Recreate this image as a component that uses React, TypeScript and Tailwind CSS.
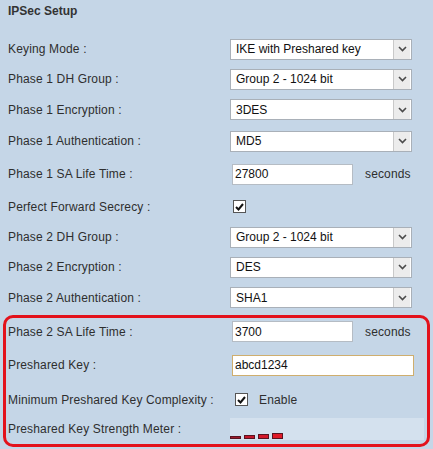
const font = { fontFamily: '"Liberation Sans", Arial, sans-serif' }

const Chevron = () => (
  <svg width="9" height="6" viewBox="0 0 9 6">
    <path d="M1 1 L4.5 4.5 L8 1" fill="none" stroke="#4a4a4a" strokeWidth="1.6" />
  </svg>
)

const Select = ({ value }: { value: string }) => (
  <div className="flex h-[21px] w-[182px] items-center border border-[#a9b0b8] bg-white">
    <div className="flex-1 pl-[5px] text-[12px] leading-none text-[#111]">{value}</div>
    <div className="mr-px flex h-[19px] w-[17px] items-center justify-center border-l border-[#c9c9c9] bg-[#ececec]">
      <Chevron />
    </div>
  </div>
)

const TextInput = ({ value, wide, gold }: { value: string; wide?: boolean; gold?: boolean }) => (
  <div
    className={
      'ml-[2px] flex h-[21px] items-center bg-white pl-[2px] text-[12px] leading-none text-[#111] ' +
      (wide ? 'w-[182px] ' : 'w-[121px] ') +
      (gold ? 'border border-[#cfae6e]' : 'border border-[#b5bcc4]')
    }
  >
    {value}
  </div>
)

const Check = () => (
  <div className="flex h-[13px] w-[13px] items-center justify-center border border-[#555] bg-white">
    <svg width="9" height="8" viewBox="0 0 9 8">
      <path d="M1 4 L3.5 6.5 L8 1" fill="none" stroke="#111" strokeWidth="2" />
    </svg>
  </div>
)

const Row = ({ label, h, children }: { label: string; h: string; children?: React.ReactNode }) => (
  <div className={'flex items-center ' + h}>
    <div className="w-[222px] shrink-0 text-[12px] tracking-[0.15px] text-[#2e2e2e]">{label}</div>
    <div className="flex items-center">{children}</div>
  </div>
)

const App = () => {
  return (
    <div className="h-[449px] w-[433px] overflow-hidden bg-[#c5d6e7]" style={font}>
      <div className="flex h-[22px] items-center pl-2 text-[12px] font-bold text-[#333]">IPSec Setup</div>
      <div className="mt-[12px] pl-2">
        <Row label="Keying Mode :" h="h-[30px]"><Select value="IKE with Preshared key" /></Row>
        <Row label="Phase 1 DH Group :" h="h-[30px]"><Select value="Group 2 - 1024 bit" /></Row>
        <Row label="Phase 1 Encryption :" h="h-[31px]"><Select value="3DES" /></Row>
        <Row label="Phase 1 Authentication :" h="h-[32px]"><Select value="MD5" /></Row>
        <Row label="Phase 1 SA Life Time :" h="h-[34px]">
          <TextInput value="27800" />
          <span className="ml-[12px] text-[12px] tracking-[0.15px] text-[#2e2e2e]">seconds</span>
        </Row>
        <Row label="Perfect Forward Secrecy :" h="h-[31px]">
          <div className="ml-[3px]"><Check /></div>
        </Row>
        <Row label="Phase 2 DH Group :" h="h-[30px]"><Select value="Group 2 - 1024 bit" /></Row>
        <Row label="Phase 2 Encryption :" h="h-[30px]"><Select value="DES" /></Row>
        <Row label="Phase 2 Authentication :" h="h-[31px]"><Select value="SHA1" /></Row>
      </div>
      <div className="ml-[3px] mt-[2px] h-[132px] w-[427px] rounded-[10px] border-[3px] border-[#e3121c] pl-[2px]">
        <Row label="Phase 2 SA Life Time :" h="h-[27px]">
          <TextInput value="3700" />
          <span className="ml-[12px] text-[12px] tracking-[0.15px] text-[#2e2e2e]">seconds</span>
        </Row>
        <Row label="Preshared Key :" h="h-[40px]"><TextInput value="abcd1234" wide gold /></Row>
        <Row label="Minimum Preshared Key Complexity :" h="h-[29px]">
          <div className="ml-[5px]"><Check /></div>
          <span className="ml-[11px] text-[12px] tracking-[0.15px] text-[#2e2e2e]">Enable</span>
        </Row>
        <div className="flex h-[30px] items-center">
          <div className="w-[222px] shrink-0 text-[12px] tracking-[0.15px] text-[#2e2e2e]">Preshared Key Strength Meter :</div>
          <div className="flex h-[22px] w-[194px] items-end gap-[3px] bg-[#d4e1ee] pb-px">
            <div className="h-[3px] w-[11px] border border-[#5a1420] bg-[#9c1a2c]" />
            <div className="h-[4px] w-[11px] border border-[#5a1420] bg-[#c4162a]" />
            <div className="h-[5px] w-[11px] border border-[#5a1420] bg-[#d2182a]" />
            <div className="h-[6px] w-[11px] border border-[#5a1420] bg-[#e01a28]" />
          </div>
        </div>
      </div>
    </div>
  )
}

export default App
